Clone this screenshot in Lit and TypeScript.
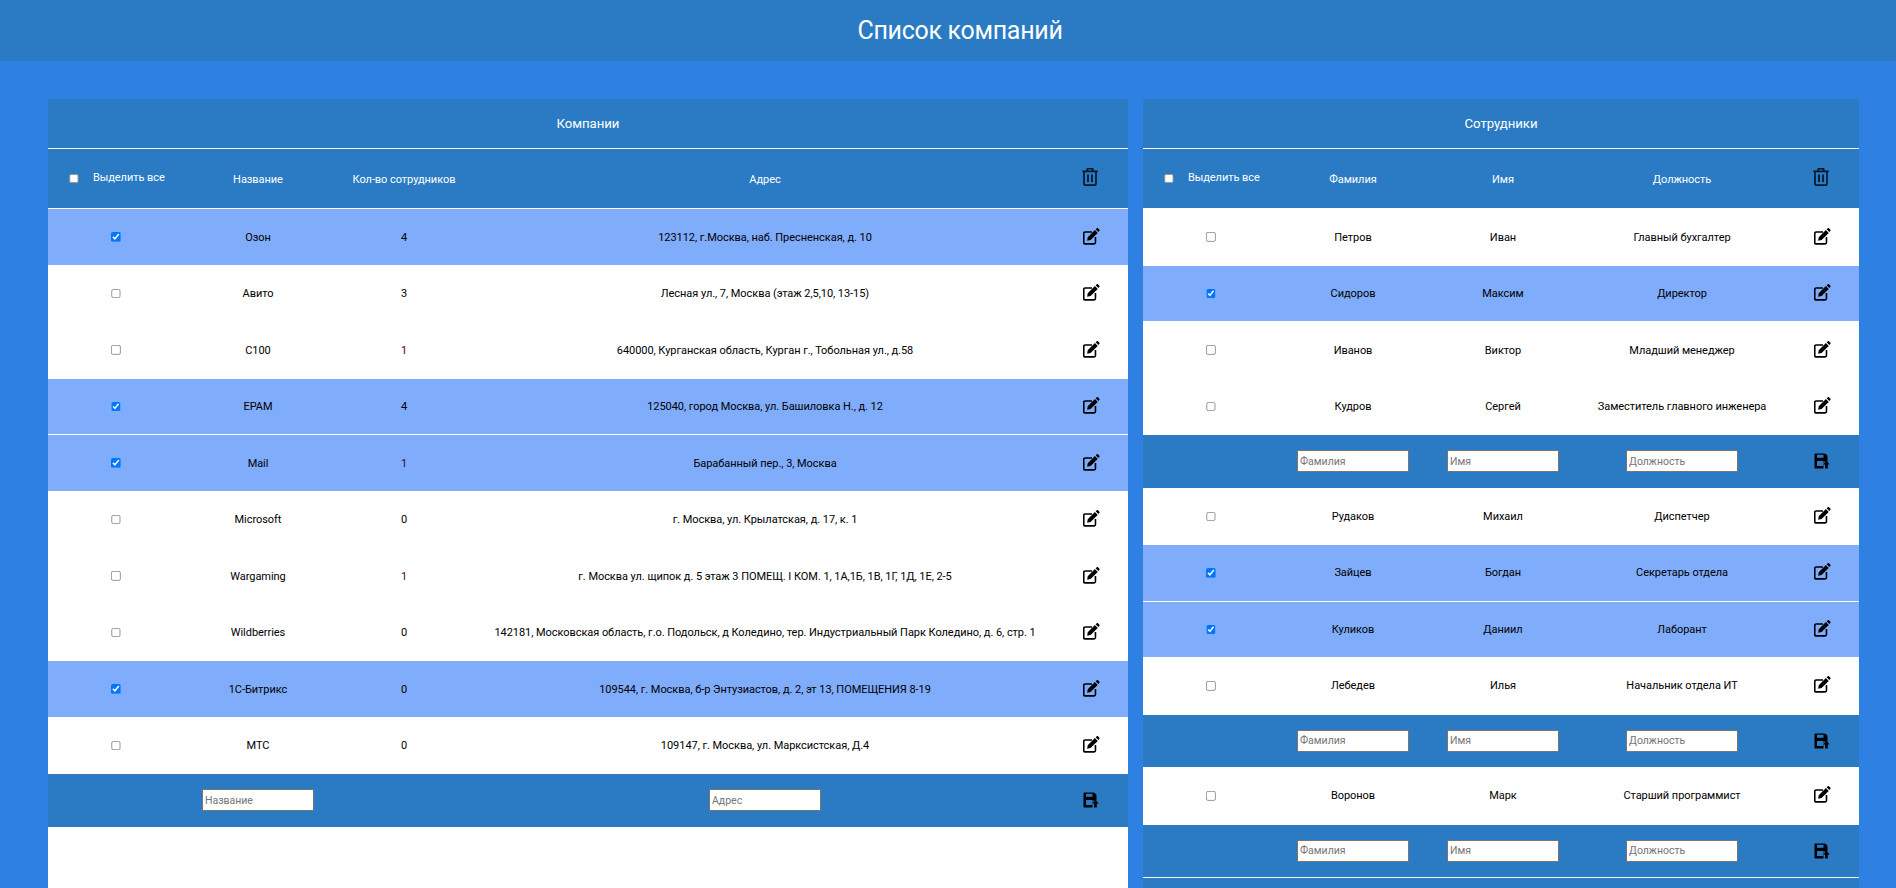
import { LitElement, html, css } from "lit";
import { customElement } from "lit/decorators.js";
import { classMap } from "lit/directives/class-map.js";

const editIcon = html`<svg class="ic edit" width="17" height="17" viewBox="0 0 18 18"><path d="M9.500 4.300H2.200c-.8 0-1.400.6-1.400 1.400v9.700c0 .8.6 1.400 1.400 1.400h9.600c.8 0 1.400-.6 1.400-1.400V9.500" fill="none" stroke="#000" stroke-width="1.700"/><path d="M5 9.800l7.600-7.600 3 3-7.600 7.600-3.600.7zM13.400 1.400l1-1c.5-.5 1.200-.5 1.700 0l1.100 1.100c.5.5.5 1.200 0 1.700l-1 1z" fill="#000"/></svg>`;
const trashIcon = html`<svg class="ic trash" width="16" height="18" viewBox="0 0 16 18"><path d="M.3 3.400h15.400M2 3.400v12.400c0 .8.6 1.400 1.400 1.400h9.200c.8 0 1.400-.6 1.400-1.400V3.400M5.200 3.400V1.600c0-.5.4-.9.9-.9h3.800c.5 0 .9.4.9.9v1.800" fill="none" stroke="#04182c" stroke-width="1.700"/><path d="M6 6.600v7.400M10 6.600v7.400" fill="none" stroke="#04182c" stroke-width="1.800"/></svg>`;
const saveIcon = html`<svg class="ic" width="16" height="16" viewBox="0 0 16 16"><path d="M1.500 .5h8.500c1.800 0 3.500 1.500 3.500 3.200v5H9.500v6.800h-8c-.6 0-1-.4-1-1V1.500c0-.6.4-1 1-1z" fill="#000"/><rect x="3" y="1.800" width="6.500" height="3" fill="#2a7bc4"/><rect x="3" y="8" width="6.500" height="5" rx=".3" fill="#2a7bc4"/><path d="M12.500 8l3.300 3.500h-2v4h-2.700v-4h-2z" fill="#000"/></svg>`;

type Co = { n: string; c: number; a: string; s?: boolean };
const companies: Co[] = [
  { n: "Озон", c: 4, a: "123112, г.Москва, наб. Пресненская, д. 10", s: true },
  { n: "Авито", c: 3, a: "Лесная ул., 7, Москва (этаж 2,5,10, 13-15)" },
  { n: "С100", c: 1, a: "640000, Курганская область, Курган г., Тобольная ул., д.58" },
  { n: "EPAM", c: 4, a: "125040, город Москва, ул. Башиловка Н., д. 12", s: true },
  { n: "Mail", c: 1, a: "Барабанный пер., 3, Москва", s: true },
  { n: "Microsoft", c: 0, a: "г. Москва, ул. Крылатская, д. 17, к. 1" },
  { n: "Wargaming", c: 1, a: "г. Москва ул. щипок д. 5 этаж 3 ПОМЕЩ. I КОМ. 1, 1А,1Б, 1В, 1Г, 1Д, 1Е, 2-5" },
  { n: "Wildberries", c: 0, a: "142181, Московская область, г.о. Подольск, д Коледино, тер. Индустриальный Парк Коледино, д. 6, стр. 1" },
  { n: "1С-Битрикс", c: 0, a: "109544, г. Москва, б-р Энтузиастов, д. 2, эт 13, ПОМЕЩЕНИЯ 8-19", s: true },
  { n: "МТС", c: 0, a: "109147, г. Москва, ул. Марксистская, Д.4" },
];

type Emp = { f: string; i: string; d: string; s?: boolean } | null;
const employees: Emp[] = [
  { f: "Петров", i: "Иван", d: "Главный бухгалтер" },
  { f: "Сидоров", i: "Максим", d: "Директор", s: true },
  { f: "Иванов", i: "Виктор", d: "Младший менеджер" },
  { f: "Кудров", i: "Сергей", d: "Заместитель главного инженера" },
  null,
  { f: "Рудаков", i: "Михаил", d: "Диспетчер" },
  { f: "Зайцев", i: "Богдан", d: "Секретарь отдела", s: true },
  { f: "Куликов", i: "Даниил", d: "Лаборант", s: true },
  { f: "Лебедев", i: "Илья", d: "Начальник отдела ИТ" },
  null,
  { f: "Воронов", i: "Марк", d: "Старший программист" },
  null,
];

@customElement("app-root")
export class AppRoot extends LitElement {
  static styles = css`
    :host {
      display: block;
      height: 888px;
      overflow: hidden;
      background: #2e81e2;
      font-family: "Roboto", "Liberation Sans", sans-serif;
      font-size: 11px;
      letter-spacing: -0.05px;
      color: #000;
    }
    header {
      height: 61px;
      background: #2a7bc4;
      color: #fff;
      font-size: 25px;
      letter-spacing: -0.3px;
      line-height: 61px;
      text-align: center;
      padding-left: 24px;
    }
    .main {
      display: grid;
      grid-template-columns: 1080px 716px;
      gap: 15px;
      padding: 38px 0 0 48px;
      height: 827px;
      box-sizing: border-box;
    }
    .panel {
      display: flex;
      flex-direction: column;
      min-height: 0;
    }
    .left { background: #fff; }
    .right { background: #2a7bc4; }
    .title {
      flex: none;
      height: 50px;
      box-sizing: border-box;
      border-bottom: 1px solid #fff;
      background: #2a7bc4;
      color: #fff;
      font-size: 13.200px;
      display: flex;
      align-items: center;
      justify-content: center;
    }
    .row {
      flex: none;
      display: grid;
      box-sizing: border-box;
      border-bottom: 1px solid #fff;
      align-items: center;
      justify-items: center;
      text-align: center;
      height: 56.500px;
      background: #fff;
    }
    .left .row { grid-template-columns: 136px 148px 144px 578px 74px; }
    .right .row { grid-template-columns: 136px 148px 152px 206px 74px; }
    .row.sel { background: #80acfc; }
    .row.head {
      height: 60.300px;
      padding-top: 2px;
      background: #2a7bc4;
      color: #fff;
    }
    .row.add {
      height: 53.400px;
      background: #2a7bc4;
    }
    input[type="checkbox"] {
      zoom: 0.75;
      display: block;
      margin: 0;
    }
    .all {
      display: flex;
      align-items: center;
      justify-content: center;
      gap: 14px;
      margin-left: 2px;
    }
    .all span { margin-bottom: 4px; }
    .all input[type="checkbox"] { margin-bottom: 3px; }
    input[type="text"] {
      width: 112px;
      height: 22px;
      box-sizing: border-box;
      padding: 1px 2px;
      margin: 0;
      border: 1px solid #767676;
      background: #fff;
      font: inherit;
      font-size: 10.500px;
    }
    input::placeholder { color: #757575; }
    .ic { display: block; }
    .edit { margin-bottom: 2px; }
    .trash { margin: 0 3px 5px 0; }
    .count-1 { color: #4a004a; }
  `;

  private empRow(e: Emp) {
    if (!e) {
      return html`<div class="row add">
        <span></span>
        <input type="text" placeholder="Фамилия" />
        <input type="text" placeholder="Имя" />
        <input type="text" placeholder="Должность" />
        ${saveIcon}
      </div>`;
    }
    return html`<div class=${classMap({ row: true, sel: !!e.s })}>
      <input type="checkbox" .checked=${!!e.s} />
      <span>${e.f}</span><span>${e.i}</span><span>${e.d}</span>
      ${editIcon}
    </div>`;
  }

  render() {
    return html`
      <header>Список компаний</header>
      <div class="main">
        <section class="panel left">
          <div class="title">Компании</div>
          <div class="row head">
            <div class="all"><input type="checkbox" /><span>Выделить все</span></div>
            <span>Название</span><span>Кол-во сотрудников</span><span>Адрес</span>
            ${trashIcon}
          </div>
          ${companies.map(
            (c) => html`<div class=${classMap({ row: true, sel: !!c.s })}>
              <input type="checkbox" .checked=${!!c.s} />
              <span>${c.n}</span>
              <span class=${c.c === 1 ? "count-1" : ""}>${c.c}</span>
              <span>${c.a}</span>
              ${editIcon}
            </div>`
          )}
          <div class="row add">
            <span></span>
            <input type="text" placeholder="Название" />
            <span></span>
            <input type="text" placeholder="Адрес" />
            ${saveIcon}
          </div>
        </section>
        <section class="panel right">
          <div class="title">Сотрудники</div>
          <div class="row head">
            <div class="all"><input type="checkbox" /><span>Выделить все</span></div>
            <span>Фамилия</span><span>Имя</span><span>Должность</span>
            ${trashIcon}
          </div>
          ${employees.map((e) => this.empRow(e))}
        </section>
      </div>
    `;
  }
}
